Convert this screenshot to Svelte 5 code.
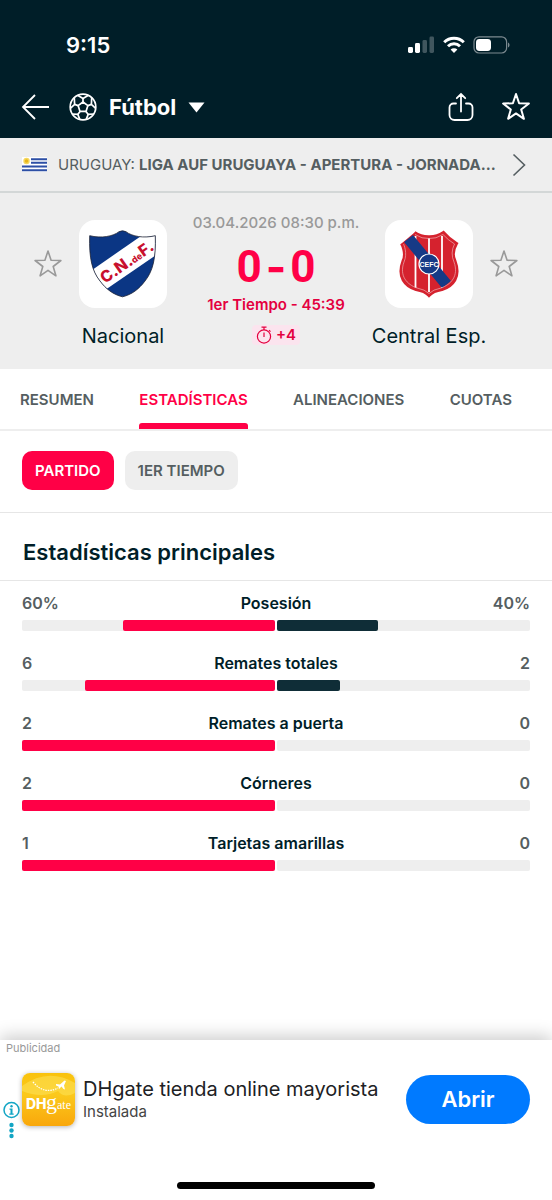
<script>
	const tabs = ['Resumen', 'Estadísticas', 'Alineaciones', 'Cuotas']
	const periods = ['Partido', '1er tiempo']

	const stats = [
		{ name: 'Posesión', home: 60, away: 40, unit: '%' },
		{ name: 'Remates totales', home: 6, away: 2, unit: '' },
		{ name: 'Remates a puerta', home: 2, away: 0, unit: '' },
		{ name: 'Córneres', home: 2, away: 0, unit: '' },
		{ name: 'Tarjetas amarillas', home: 1, away: 0, unit: '' }
	]

	let activeTab = 'Estadísticas'
	let activePeriod = 'Partido'

	// share of the total for one side, in percent
	function share(value, stat){
		return (value / (stat.home + stat.away)) * 100
	}
</script>

{#snippet star(weight)}
	<svg width="30" height="30" viewBox="0 0 30 30" fill="none" stroke="currentColor" stroke-width={weight} stroke-linejoin="round" aria-hidden="true">
		<path d="M15 2l3.1 9.300 9.800.200-7.700 6 2.700 9.300L15 21.400l-7.900 5.400 2.700-9.300-7.700-6 9.800-.200z" />
	</svg>
{/snippet}

<div class="page">
	<header>
		<div class="status-bar">
			<span class="time">9:15</span>
			<div class="status-icons">
				<svg width="27" height="18" viewBox="0 0 27 18" fill="#fff" aria-hidden="true">
					<rect x="0" y="11" width="5" height="6" rx="1.4" />
					<rect x="7" y="7" width="5" height="10" rx="1.4" />
					<rect x="14.5" y="4" width="4.5" height="13" rx="1.4" opacity=".25" />
					<rect x="21.5" y="0.5" width="4.5" height="16.5" rx="1.4" opacity=".25" />
				</svg>
				<svg width="22" height="18" viewBox="0 0 22 18" fill="none" stroke="#fff" stroke-width="3" aria-hidden="true">
					<path d="M1.2 6.2a14 14 0 0 1 19.6 0" />
					<path d="M5 10.3a8.6 8.6 0 0 1 12 0" />
					<path d="M11 17l-3.4-3.5a4.9 4.9 0 0 1 6.8 0z" fill="#fff" stroke="none" />
				</svg>
				<svg width="38" height="18" viewBox="0 0 38 18" aria-hidden="true">
					<rect x="1" y=".8" width="32.6" height="16.2" rx="5" fill="none" stroke="#7c8a90" stroke-width="1.2" />
					<rect x="3" y="3" width="15" height="12" rx="3.4" fill="#fff" />
					<path d="M35 6.5c2 .8 2 4.2 0 5z" fill="#7c8a90" />
				</svg>
			</div>
		</div>

		<div class="nav">
			<button class="icon-button" aria-label="Volver">
				<svg width="28" height="26" viewBox="0 0 28 26" fill="none" stroke="#fff" stroke-width="1.8" aria-hidden="true">
					<path d="M28 13H2M14 1L2 13l12 12" />
				</svg>
			</button>
			<button class="sport">
				<svg width="28" height="28" viewBox="0 0 28 28" fill="none" stroke="#fff" stroke-width="1.7" stroke-linejoin="round" aria-hidden="true">
					<circle cx="14" cy="14" r="12.8" />
					<path d="M14 9l4.9 3.6-1.9 5.8h-6l-1.9-5.8z" />
					<path d="M14 9V5.4M18.9 12.6l3.5-1.2M17 18.4l2.2 3M11 18.4l-2.2 3M9.1 12.6l-3.5-1.2" />
					<path d="M9 2.6L14 5.4l5-2.8M22.7 4.7l-.3 6.7 4 3.8M24.7 21l-5.5.4-2 5M3.3 21l5.5.4 2 5M5.3 4.7l.3 6.7-4 3.8" />
				</svg>
				<span>Fútbol</span>
				<svg width="17" height="11" viewBox="0 0 17 11" fill="#fff" aria-hidden="true">
					<path d="M.5.5h16l-8 10z" />
				</svg>
			</button>
			<div class="actions">
				<button class="icon-button" aria-label="Compartir">
					<svg width="28" height="30" viewBox="0 0 28 30" fill="none" stroke="#fff" stroke-width="1.8" stroke-linecap="round" aria-hidden="true">
						<path d="M9 11.5H6.5a4 4 0 0 0-4 4V23a5 5 0 0 0 5 5h13a5 5 0 0 0 5-5v-7.5a4 4 0 0 0-4-4H19M14 19.5v-17M9.800 6.200L14 2l4.200 4.200" />
					</svg>
				</button>
				<button class="icon-button" aria-label="Añadir a favoritos">{@render star(2)}</button>
			</div>
		</div>
	</header>

	<a class="league" href="#liga">
		<svg width="25" height="15" viewBox="0 0 25 15" aria-hidden="true">
			<rect width="25" height="15" fill="#fff" />
			<path d="M9 2.2h16M9 5.8h16M0 9.5h25M0 13.2h25" stroke="#2d4fa5" stroke-width="1.9" />
			<circle cx="4.5" cy="4" r="3.2" fill="#f5d75c" />
			<circle cx="4.5" cy="4" r="1.8" fill="#e8b51c" />
		</svg>
		<span class="league-name">URUGUAY: <b>LIGA AUF URUGUAYA - APERTURA - JORNADA...</b></span>
		<svg width="14" height="24" viewBox="0 0 14 24" fill="none" stroke="#555e61" stroke-width="1.6" aria-hidden="true">
			<path d="M1.5 1.5L12.5 12l-11 10.500" />
		</svg>
	</a>

	<section class="match">
		<button class="favorite" aria-label="Seguir a Nacional">{@render star(1.6)}</button>
		<div class="team">
			<div class="crest">
				<svg width="88" height="88" viewBox="0 0 88 88" aria-hidden="true">
					<clipPath id="shieldHome">
						<path d="M10.700 15.700C22 18.500 34 16.500 40 11.700q3.500-1.800 7 0C53 16.500 65 18.500 76.300 15.700 77 38 74 51 66 61 60 69 53 74.500 43.500 76.800 34 74.500 27 69 21 61 13 51 10 38 10.700 15.700z" />
					</clipPath>
					<g clip-path="url(#shieldHome)">
						<rect width="88" height="88" fill="#0b3684" />
						<path d="M0 59L65 14h23v13.500L21 73.500z" fill="#fff" />
					</g>
					<path d="M10.700 15.700C22 18.500 34 16.500 40 11.700q3.500-1.800 7 0C53 16.500 65 18.500 76.300 15.700 77 38 74 51 66 61 60 69 53 74.500 43.500 76.800 34 74.500 27 69 21 61 13 51 10 38 10.700 15.700z" fill="none" stroke="#1d2233" stroke-width=".8" />
					<text class="crest-text" transform="translate(26 64) rotate(-35)" fill="#c8102e" font-size="16">C.N.<tspan font-size="9">de</tspan>F.</text>
				</svg>
			</div>
			<span class="team-name">Nacional</span>
		</div>

		<div class="info">
			<span class="date">03.04.2026 08:30 p.m.</span>
			<div class="score"><span>0</span><span class="dash">-</span><span>0</span></div>
			<span class="period">1er Tiempo - 45:39</span>
			<span class="added">
				<svg width="16" height="18" viewBox="0 0 16 18" fill="none" stroke="#e4003f" stroke-width="1.2" aria-hidden="true">
					<circle cx="8" cy="10.5" r="6.6" />
					<path d="M8 11V6.500M5.500 1.200h5M8 1.200v2.700M13 4.200l1.500 1.500" />
				</svg>
				+4
			</span>
		</div>

		<div class="team">
			<div class="crest">
				<svg width="88" height="88" viewBox="0 0 88 88" aria-hidden="true">
					<clipPath id="shieldAway">
						<path d="M29.500 12.500Q36 17 44 16.800 52 17 58.500 12.500 64 19 71.500 23.500 66 33 70 41C76 57 68 66 57 69.500Q48 71 44 75.500 40 71 31 69.500C20 66 12 57 18 41 22 33 16.500 23.500 16.500 23.500 24 19 29.500 12.500z" />
					</clipPath>
					<g clip-path="url(#shieldAway)">
						<rect width="88" height="88" fill="#d5222e" />
						<path d="M30.500 16v52M44 18v54M57 16v52" stroke="#fff" stroke-width="1.8" />
						<path d="M19 22l9-7 38 46-9 7z" fill="#163a86" />
					</g>
					<path d="M29.500 12.500Q36 17 44 16.800 52 17 58.500 12.500 64 19 71.500 23.500 66 33 70 41C76 57 68 66 57 69.500Q48 71 44 75.500 40 71 31 69.500C20 66 12 57 18 41 22 33 16.500 23.500 16.500 23.500 24 19 29.500 12.500z" fill="none" stroke="#d5222e" stroke-width="3" />
					<path d="M30 14.500Q37 19 44 18.500 51 19 58 14.500 63 20 69.500 24 65 33 69 42C74 56 66 64.500 56 68Q48 69.500 44 73.500 40 69.500 32 68C22 64.500 14 56 19 42 23 33 18.500 24 18.500 24 25 20 30 14.500z" fill="none" stroke="#f3c4c8" stroke-width=".6" />
					<circle cx="44" cy="44" r="10" fill="#163a86" stroke="#fff" stroke-width="1.2" />
					<text class="crest-text narrow" x="44" y="46.500" fill="#fff" font-size="7" text-anchor="middle">CEFC</text>
				</svg>
			</div>
			<span class="team-name">Central Esp.</span>
		</div>
		<button class="favorite" aria-label="Seguir a Central Esp.">{@render star(1.6)}</button>
	</section>

	<nav class="tabs">
		{#each tabs as tab}
			<button class:active={tab == activeTab} on:click={() => (activeTab = tab)}>{tab}</button>
		{/each}
	</nav>

	<div class="periods">
		{#each periods as period}
			<button class:active={period == activePeriod} on:click={() => (activePeriod = period)}>{period}</button>
		{/each}
	</div>

	<main>
		<h2>Estadísticas principales</h2>
		<div class="stats">
			{#each stats as stat}
				<div class="stat">
					<div class="stat-labels">
						<span class="value">{stat.home}{stat.unit}</span>
						<span>{stat.name}</span>
						<span class="value away">{stat.away}{stat.unit}</span>
					</div>
					<div class="bars">
						<div class="track home"><div class="fill" style="width: {share(stat.home, stat)}%"></div></div>
						<div class="track"><div class="fill" style="width: {share(stat.away, stat)}%"></div></div>
					</div>
				</div>
			{/each}
		</div>
	</main>

	<footer>
		<span class="ad-label">Publicidad</span>
		<div class="ad">
			<button class="ad-info" aria-label="Información del anuncio">
				<svg width="17" height="38" viewBox="0 0 17 38" fill="#12a5c4" aria-hidden="true">
					<circle cx="8.5" cy="9" r="7.5" fill="none" stroke="#12a5c4" stroke-width="1.5" />
					<circle cx="8.5" cy="5.3" r="1.2" />
					<path d="M6.500 7.500h3v5h1.200v1.200H6.300v-1.200h1.200V8.700h-1z" />
					<circle cx="8.5" cy="24" r="2.2" />
					<circle cx="8.5" cy="29.5" r="2.2" />
					<circle cx="8.5" cy="35" r="2.2" />
				</svg>
			</button>
			<svg class="app-icon" width="53" height="53" viewBox="0 0 53 53" aria-hidden="true">
				<defs>
					<linearGradient id="gold" x1="0" y1="0" x2="0" y2="1">
						<stop offset="0" stop-color="#f9c20c" />
						<stop offset=".4" stop-color="#fbc91d" />
						<stop offset="1" stop-color="#f9a70b" />
					</linearGradient>
				</defs>
				<rect width="53" height="53" fill="url(#gold)" />
				<path d="M0 13Q26-6 53 10V20Q42 26 36 18 20 26 0 18z" fill="#fde25a" opacity=".55" />
				<path d="M11 9q11 13 25 6" fill="none" stroke="#fff" stroke-width="1.2" stroke-dasharray="1.5 1" />
				<path d="M34 11l4 .500 4.500-4 1.500.5-2 4.500 1 4-1.500-.5-2-2.500-2.500 2.500-.500-2.500-2.500-1z" fill="#fff" />
				<text class="dh" x="4" y="36" font-size="14" fill="#fff">DH</text>
				<text class="gate" x="24" y="36" font-size="22" fill="#fff">g<tspan font-size="12">ate</tspan></text>
			</svg>
			<div class="ad-text">
				<span class="ad-title">DHgate tienda online mayorista</span>
				<span class="ad-subtitle">Instalada</span>
			</div>
			<button class="open">Abrir</button>
		</div>
		<div class="home-indicator"></div>
	</footer>
</div>

<style>
	:global(body) {
		background: #fff;
	}
	.page {
		display: flex;
		flex-direction: column;
		min-height: 100vh;
		font-family: Inter, "Liberation Sans", sans-serif;
		color: #001e28;
	}
	button {
		padding: 0;
		border: none;
		background: none;
		font: inherit;
		color: inherit;
		cursor: pointer;
	}
	svg {
		display: block;
		flex: none;
	}

	header {
		padding: 32px 21px 16px;
		background: #001e28;
		color: #fff;
	}
	.status-bar {
		display: flex;
		align-items: center;
		justify-content: space-between;
		height: 26px;
		padding: 0 20px 0 45px;
	}
	.time {
		font-size: 22px;
		font-weight: 600;
	}
	.status-icons {
		display: flex;
		align-items: center;
		gap: 8px;
	}
	.nav {
		display: flex;
		align-items: center;
		height: 30px;
		margin-top: 34px;
	}
	.sport {
		display: flex;
		align-items: center;
		gap: 12px;
		margin-left: 20px;
		font-size: 22px;
		font-weight: 700;
	}
	.actions {
		display: flex;
		gap: 26px;
		margin-left: auto;
	}

	.league {
		display: flex;
		align-items: center;
		gap: 11px;
		height: 53px;
		padding: 0 26px 0 22px;
		border-bottom: 2px solid #d3d7d7;
		background: #eee;
		color: #555e61;
		font-size: 15px;
		text-decoration: none;
	}
	.league-name {
		flex: 1;
		min-width: 0;
		overflow: hidden;
		text-overflow: ellipsis;
		white-space: nowrap;
	}
	.league-name b {
		font-weight: 700;
	}

	.match {
		display: flex;
		align-items: flex-start;
		padding: 20px 33px 18px;
		background: #eee;
	}
	.favorite {
		display: flex;
		align-items: center;
		height: 88px;
		margin-top: 7px;
		color: #999;
	}
	.team {
		display: flex;
		flex-direction: column;
		align-items: center;
		width: 120px;
		margin-top: 7px;
	}
	.crest {
		border-radius: 16px;
		background: #fff;
	}
	.crest-text {
		font-family: Inter, sans-serif;
		font-weight: 800;
	}
	.crest-text.narrow {
		font-family: "Liberation Sans Narrow", "Liberation Sans", sans-serif;
		font-weight: 700;
	}
	.team-name {
		margin-top: 14px;
		font-size: 20px;
		line-height: 29px;
		white-space: nowrap;
	}
	.info {
		display: flex;
		flex: 1;
		flex-direction: column;
		align-items: center;
		font-size: 15px;
		font-weight: 600;
		line-height: 20px;
		white-space: nowrap;
	}
	.date {
		color: #999;
		font-weight: 500;
	}
	.score {
		display: flex;
		gap: 4px;
		margin-top: 12px;
		font-family: Roboto, sans-serif;
		font-size: 44px;
		font-weight: 700;
		line-height: 44px;
		color: #ff0046;
	}
	.dash {
		font-family: Inter, sans-serif;
	}
	.period {
		margin-top: 6px;
		color: #e4003f;
	}
	.added {
		display: flex;
		align-items: center;
		gap: 4px;
		margin-top: 10px;
		padding: 0 4px;
		border-radius: 4px;
		background: #fbe4ee;
		color: #e4003f;
	}

	.tabs {
		display: flex;
		justify-content: space-between;
		height: 60px;
		padding: 0 40px 0 20px;
		border-bottom: 2px solid #eee;
	}
	.tabs button {
		display: grid;
		grid-template-rows: 6px 1fr 6px;
		align-items: center;
		color: #555e61;
		font-size: 15px;
		font-weight: 600;
		text-transform: uppercase;
	}
	.tabs button::before,
	.tabs button::after {
		content: "";
		height: 6px;
		border-radius: 3px 3px 0 0;
	}
	.tabs .active {
		color: #ff0046;
	}
	.tabs .active::after {
		background: #ff0046;
	}

	.periods {
		display: flex;
		gap: 11px;
		padding: 20px 22px 22px;
		border-bottom: 1px solid #e6e6e6;
	}
	.periods button {
		height: 39px;
		padding: 0 13px;
		border-radius: 10px;
		background: #eee;
		color: #555e61;
		font-size: 15px;
		font-weight: 600;
		text-transform: uppercase;
	}
	.periods .active {
		background: #ff0046;
		color: #fff;
	}

	h2 {
		margin: 0;
		padding: 24px 23px 13px;
		border-bottom: 1px solid #e6e6e6;
		font-size: 22px;
		font-weight: 600;
		line-height: 30px;
	}
	.stats {
		display: flex;
		flex-direction: column;
		gap: 22px;
		padding: 12px 22px;
	}
	.stat-labels {
		display: grid;
		grid-template-columns: 1fr auto 1fr;
		font-size: 16px;
		font-weight: 600;
		line-height: 20px;
	}
	.value {
		color: #555e61;
	}
	.away {
		text-align: right;
	}
	.bars {
		display: grid;
		grid-template-columns: 1fr 1fr;
		gap: 2px;
		margin-top: 7px;
	}
	.track {
		display: flex;
		height: 11px;
		border-radius: 2px;
		background: #eee;
	}
	.track.home {
		justify-content: flex-end;
	}
	.fill {
		border-radius: 2px;
		background: #0f2d37;
	}
	.home .fill {
		background: #ff0046;
	}

	footer {
		display: flex;
		flex-direction: column;
		margin-top: auto;
		padding-bottom: 11px;
		background: #fff;
		box-shadow: 0 -4px 16px rgba(0, 0, 0, 0.2);
	}
	.ad-label {
		padding: 0 6px;
		color: #999;
		font-size: 11px;
		line-height: 16px;
	}
	.ad {
		display: flex;
		align-items: center;
		height: 86px;
		padding: 0 22px 0 3px;
	}
	.ad-info {
		align-self: flex-end;
		margin: 0 2px 3px 0;
	}
	.app-icon {
		border-radius: 8px;
		box-shadow: 0 1px 5px rgba(0, 0, 0, 0.3);
	}
	.dh {
		font-family: Inter, sans-serif;
		font-weight: 800;
	}
	.gate {
		font-family: "Liberation Serif", serif;
	}
	.ad-text {
		display: flex;
		flex: 1;
		flex-direction: column;
		min-width: 0;
		margin-left: 8px;
		white-space: nowrap;
	}
	.ad-title {
		color: #202124;
		font-size: 20px;
		line-height: 26px;
	}
	.ad-subtitle {
		color: #444;
		font-size: 15px;
		line-height: 20px;
	}
	.open {
		width: 124px;
		height: 49px;
		border-radius: 25px;
		background: #007aff;
		color: #fff;
		font-size: 22px;
		font-weight: 600;
	}
	.home-indicator {
		align-self: center;
		width: 198px;
		height: 7px;
		margin-top: 40px;
		border-radius: 4px;
		background: #000;
	}
</style>
